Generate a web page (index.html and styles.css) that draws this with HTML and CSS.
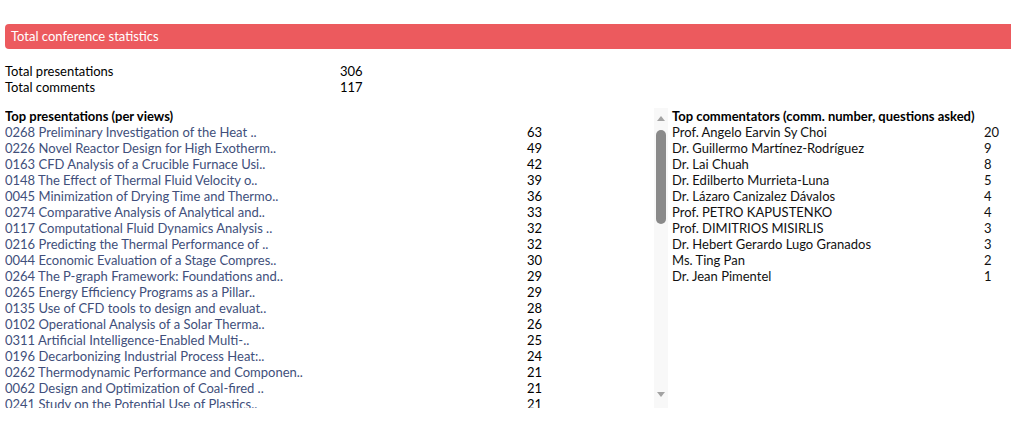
FILE: index.html
```html
<!DOCTYPE html>
<html lang="en">
<head>
<meta charset="utf-8">
<title>Total conference statistics</title>
<link rel="stylesheet" href="styles.css">
</head>
<body>
<div class="panel-header">Total conference statistics</div>

<div class="totals">
  <span>Total presentations</span><span class="num">306</span>
  <span>Total comments</span><span class="num">117</span>
</div>

<div class="lists">
  <div class="left-wrap">
    <div class="scroll-area">
      <div class="pres-grid">
        <div class="heading">Top presentations (per views)</div>
        <a class="title">0268 Preliminary Investigation of the Heat ..</a><span class="num">63</span>
        <a class="title">0226 Novel Reactor Design for High Exotherm..</a><span class="num">49</span>
        <a class="title">0163 CFD Analysis of a Crucible Furnace Usi..</a><span class="num">42</span>
        <a class="title">0148 The Effect of Thermal Fluid Velocity o..</a><span class="num">39</span>
        <a class="title">0045 Minimization of Drying Time and Thermo..</a><span class="num">36</span>
        <a class="title">0274 Comparative Analysis of Analytical and..</a><span class="num">33</span>
        <a class="title">0117 Computational Fluid Dynamics Analysis ..</a><span class="num">32</span>
        <a class="title">0216 Predicting the Thermal Performance of ..</a><span class="num">32</span>
        <a class="title">0044 Economic Evaluation of a Stage Compres..</a><span class="num">30</span>
        <a class="title">0264 The P-graph Framework: Foundations and..</a><span class="num">29</span>
        <a class="title">0265 Energy Efficiency Programs as a Pillar..</a><span class="num">29</span>
        <a class="title">0135 Use of CFD tools to design and evaluat..</a><span class="num">28</span>
        <a class="title">0102 Operational Analysis of a Solar Therma..</a><span class="num">26</span>
        <a class="title">0311 Artificial Intelligence-Enabled Multi-..</a><span class="num">25</span>
        <a class="title">0196 Decarbonizing Industrial Process Heat:..</a><span class="num">24</span>
        <a class="title">0262 Thermodynamic Performance and Componen..</a><span class="num">21</span>
        <a class="title">0062 Design and Optimization of Coal-fired ..</a><span class="num">21</span>
        <a class="title">0241 Study on the Potential Use of Plastics..</a><span class="num">21</span>
      </div>
    </div>
    <div class="scrollbar">
      <span class="arrow up"></span>
      <div class="track"><div class="thumb"></div></div>
      <span class="arrow down"></span>
    </div>
  </div>

  <div class="right">
    <div class="com-grid">
      <div class="heading">Top commentators (comm. number, questions asked)</div>
      <span>Prof. Angelo Earvin Sy Choi</span><span>20</span>
      <span>Dr. Guillermo Martínez-Rodríguez</span><span>9</span>
      <span>Dr. Lai Chuah</span><span>8</span>
      <span>Dr. Edilberto Murrieta-Luna</span><span>5</span>
      <span>Dr. Lázaro Canizalez Dávalos</span><span>4</span>
      <span>Prof. PETRO KAPUSTENKO</span><span>4</span>
      <span>Prof. DIMITRIOS MISIRLIS</span><span>3</span>
      <span>Dr. Hebert Gerardo Lugo Granados</span><span>3</span>
      <span>Ms. Ting Pan</span><span>2</span>
      <span>Dr. Jean Pimentel</span><span>1</span>
    </div>
  </div>
</div>
</body>
</html>
```

FILE: styles.css
```css
html, body {
  margin: 0;
  padding: 0;
  background: #ffffff;
}

body {
  font-family: Lato, "Open Sans", sans-serif;
  font-size: 13px;
  line-height: 16px;
  color: #111111;
  padding: 24px 0 0 5px;
  overflow: hidden;
}

.panel-header {
  background: #ec5a5e;
  color: #ffffff;
  height: 25px;
  line-height: 25px;
  padding-left: 6px;
  border-radius: 4px 0 0 4px;
}

.totals {
  display: grid;
  grid-template-columns: 335px auto;
  margin-top: 14px;
  color: #000000;
}

.lists {
  display: flex;
  margin-top: 13px;
}

.left-wrap {
  display: flex;
  width: 663px;
  height: 300px;
  flex: none;
}

.scroll-area {
  width: 649px;
  height: 300px;
  overflow: hidden;
}

.pres-grid {
  display: grid;
  grid-template-columns: 522px auto;
}

.heading {
  grid-column: 1 / -1;
  font-weight: bold;
  color: #000000;
}

.title {
  color: #414f7b;
  text-decoration: none;
  white-space: nowrap;
}

.num {
  color: #000000;
}

.scrollbar {
  width: 14px;
  height: 300px;
  background: #f8f8f8;
  display: flex;
  flex-direction: column;
  align-items: center;
}

.arrow {
  width: 0;
  height: 0;
  border-left: 4px solid transparent;
  border-right: 4px solid transparent;
  flex: none;
}

.arrow.up {
  margin-top: 8px;
  border-bottom: 5px solid #a3a3a3;
}

.arrow.down {
  margin-bottom: 11px;
  border-top: 5px solid #a3a3a3;
}

.track {
  flex: 1;
  width: 100%;
  display: flex;
  justify-content: center;
  padding-top: 9px;
}

.thumb {
  width: 10px;
  height: 94px;
  border-radius: 5px;
  background: #8a8a8a;
}

.right {
  margin-left: 4px;
}

.com-grid {
  display: grid;
  grid-template-columns: 312px auto;
  color: #111111;
}
```
